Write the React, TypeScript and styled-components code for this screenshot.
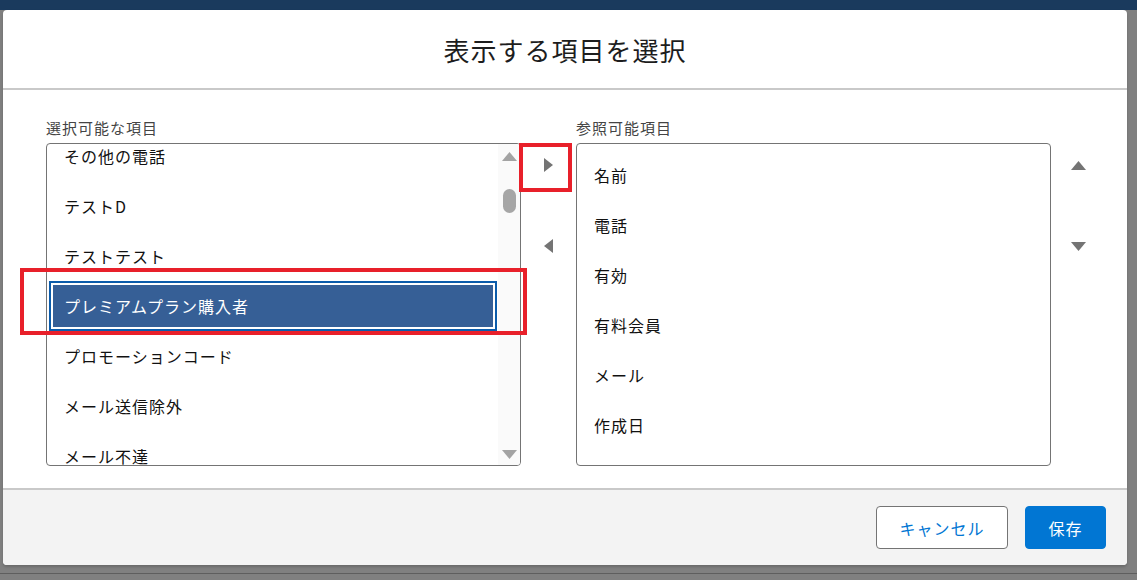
import React from 'react'
import styled, { createGlobalStyle, css } from 'styled-components'

const GlobalStyle = createGlobalStyle`
  html, body {
    margin: 0;
    padding: 0;
    background: #808080;
  }
  body {
    font-family: "Noto Sans CJK JP", "Noto Sans", sans-serif;
  }
`

const availableItems = [
  'その他の電話',
  'テストD',
  'テストテスト',
  'プレミアムプラン購入者',
  'プロモーションコード',
  'メール送信除外',
  'メール不達',
]
const selectedItems = ['名前', '電話', '有効', '有料会員', 'メール', '作成日']

const Page = styled.div`
  width: 1137px;
  height: 580px;
  background: #808080;
  overflow: hidden;
`

const TopBand = styled.div`
  height: 10px;
  background: #1a3a5d;
`

const ModalWrap = styled.div`
  padding-left: 3px;
`

const Modal = styled.section`
  width: 1124px;
  height: 555px;
  background: #fff;
  border-radius: 4px;
  display: flex;
  flex-direction: column;
  box-shadow: 0 2px 3px rgba(0, 0, 0, 0.18);
`

const Header = styled.header`
  height: 78px;
  border-bottom: 2px solid #c9c9c9;
  display: flex;
  align-items: center;
  justify-content: center;
`

const Title = styled.h2`
  margin: 0;
  font-size: 26px;
  font-weight: 400;
  color: #1d1d1d;
  letter-spacing: 1px;
`

const Body = styled.div`
  position: relative;
  flex: 1;
  padding: 28px 22px 0 43px;
`

const Dueling = styled.div`
  display: flex;
  align-items: flex-start;
`

const Column = styled.div`
  display: flex;
  flex-direction: column;
`

const Label = styled.div`
  height: 20px;
  line-height: 20px;
  margin-bottom: 5px;
  font-size: 15px;
  letter-spacing: 1px;
  color: #444;
`

const ListBox = styled.div`
  box-sizing: border-box;
  width: 475px;
  height: 323px;
  border: 1px solid #747474;
  border-radius: 4px;
  overflow: hidden;
  display: flex;
`

const Viewport = styled.div`
  flex: 1;
  overflow: hidden;
`

const Options = styled.ul<{ $offset: number }>`
  list-style: none;
  margin: ${(p) => p.$offset}px 0 0;
  padding: 0;
`

const Option = styled.li<{ $selected?: boolean }>`
  box-sizing: border-box;
  height: 50px;
  display: flex;
  align-items: center;
  padding-left: 17px;
  font-size: 16px;
  letter-spacing: 1px;
  color: #111;
  ${(p) =>
    p.$selected &&
    css`
      margin: 0 1px 0 2px;
      padding-left: 13px;
      border: 2px solid #0b5cab;
      box-shadow: inset 0 0 0 2px #fff;
      background: #365f96;
      color: #fff;
    `}
`

const Scrollbar = styled.div`
  width: 22px;
  background: #fafafa;
  display: flex;
  flex-direction: column;
  align-items: center;
  padding: 8px 0 6px;
  box-sizing: border-box;
`

const Thumb = styled.div`
  width: 13px;
  height: 24px;
  margin-top: 28px;
  border-radius: 7px;
  background: #a6a6a6;
`

const Spacer = styled.div`
  flex: 1;
`

const Controls = styled.div<{ $width: number }>`
  width: ${(p) => p.$width}px;
  margin-top: 27px;
  display: flex;
  flex-direction: column;
`

const MoveButton = styled.button`
  height: 40px;
  margin: 0 0 41px;
  padding: 0;
  border: 0;
  background: transparent;
  display: flex;
  align-items: center;
  justify-content: center;
`

const Highlight = styled.div<{ $left: number; $top: number; $w: number; $h: number }>`
  position: absolute;
  left: ${(p) => p.$left}px;
  top: ${(p) => p.$top}px;
  width: ${(p) => p.$w}px;
  height: ${(p) => p.$h}px;
  box-sizing: border-box;
  border: 4px solid #e8202a;
  pointer-events: none;
`

const Footer = styled.footer`
  box-sizing: border-box;
  height: 77px;
  border-top: 2px solid #c9c9c9;
  background: #f3f3f3;
  border-radius: 0 0 4px 4px;
  padding: 16px 21px 0 0;
  display: flex;
  justify-content: flex-end;
  align-items: flex-start;
  gap: 17px;
`

const Button = styled.button<{ $brand?: boolean; $width: number }>`
  width: ${(p) => p.$width}px;
  height: 43px;
  padding: 0;
  border-radius: 4px;
  font-family: inherit;
  font-size: 16px;
  letter-spacing: 1px;
  border: 1px solid ${(p) => (p.$brand ? '#0176d3' : '#747474')};
  background: ${(p) => (p.$brand ? '#0176d3' : '#fff')};
  color: ${(p) => (p.$brand ? '#fff' : '#0176d3')};
`

const BelowLine = styled.div`
  margin-top: 8px;
  height: 1px;
  background: #5e5e5e;
`

type Dir = 'up' | 'down' | 'left' | 'right'

const Tri = ({ dir, color = '#747474' }: { dir: Dir; color?: string }) => {
  const vertical = dir === 'up' || dir === 'down'
  const w = vertical ? 15 : 9
  const h = vertical ? 9 : 14
  const pts = {
    up: '0,9 7.5,0 15,9',
    down: '0,0 15,0 7.5,9',
    right: '0,0 9,7 0,14',
    left: '9,0 9,14 0,7',
  }[dir]
  return (
    <svg width={w} height={h} viewBox={`0 0 ${w} ${h}`}>
      <polygon points={pts} fill={color} />
    </svg>
  )
}

export default function App() {
  return (
    <Page>
      <GlobalStyle />
      <TopBand />
      <ModalWrap>
        <Modal>
          <Header>
            <Title>表示する項目を選択</Title>
          </Header>
          <Body>
            <Dueling>
              <Column>
                <Label>選択可能な項目</Label>
                <ListBox>
                  <Viewport>
                    <Options $offset={-13}>
                      {availableItems.map((item) => (
                        <Option key={item} $selected={item === 'プレミアムプラン購入者'}>
                          {item}
                        </Option>
                      ))}
                    </Options>
                  </Viewport>
                  <Scrollbar>
                    <Tri dir="up" color="#a3a3a3" />
                    <Thumb />
                    <Spacer />
                    <Tri dir="down" color="#a3a3a3" />
                  </Scrollbar>
                </ListBox>
              </Column>
              <Controls $width={55}>
                <MoveButton aria-label="選択">
                  <Tri dir="right" />
                </MoveButton>
                <MoveButton aria-label="選択解除">
                  <Tri dir="left" />
                </MoveButton>
              </Controls>
              <Column>
                <Label>参照可能項目</Label>
                <ListBox>
                  <Viewport>
                    <Options $offset={6}>
                      {selectedItems.map((item) => (
                        <Option key={item}>{item}</Option>
                      ))}
                    </Options>
                  </Viewport>
                </ListBox>
              </Column>
              <Controls $width={54}>
                <MoveButton aria-label="上へ">
                  <Tri dir="up" />
                </MoveButton>
                <MoveButton aria-label="下へ">
                  <Tri dir="down" />
                </MoveButton>
              </Controls>
            </Dueling>
            <Highlight $left={17} $top={178} $w={507} $h={67} />
            <Highlight $left={516} $top={53} $w={53} $h={49} />
          </Body>
          <Footer>
            <Button $width={132}>キャンセル</Button>
            <Button $brand $width={81}>保存</Button>
          </Footer>
        </Modal>
      </ModalWrap>
      <BelowLine />
    </Page>
  )
}
